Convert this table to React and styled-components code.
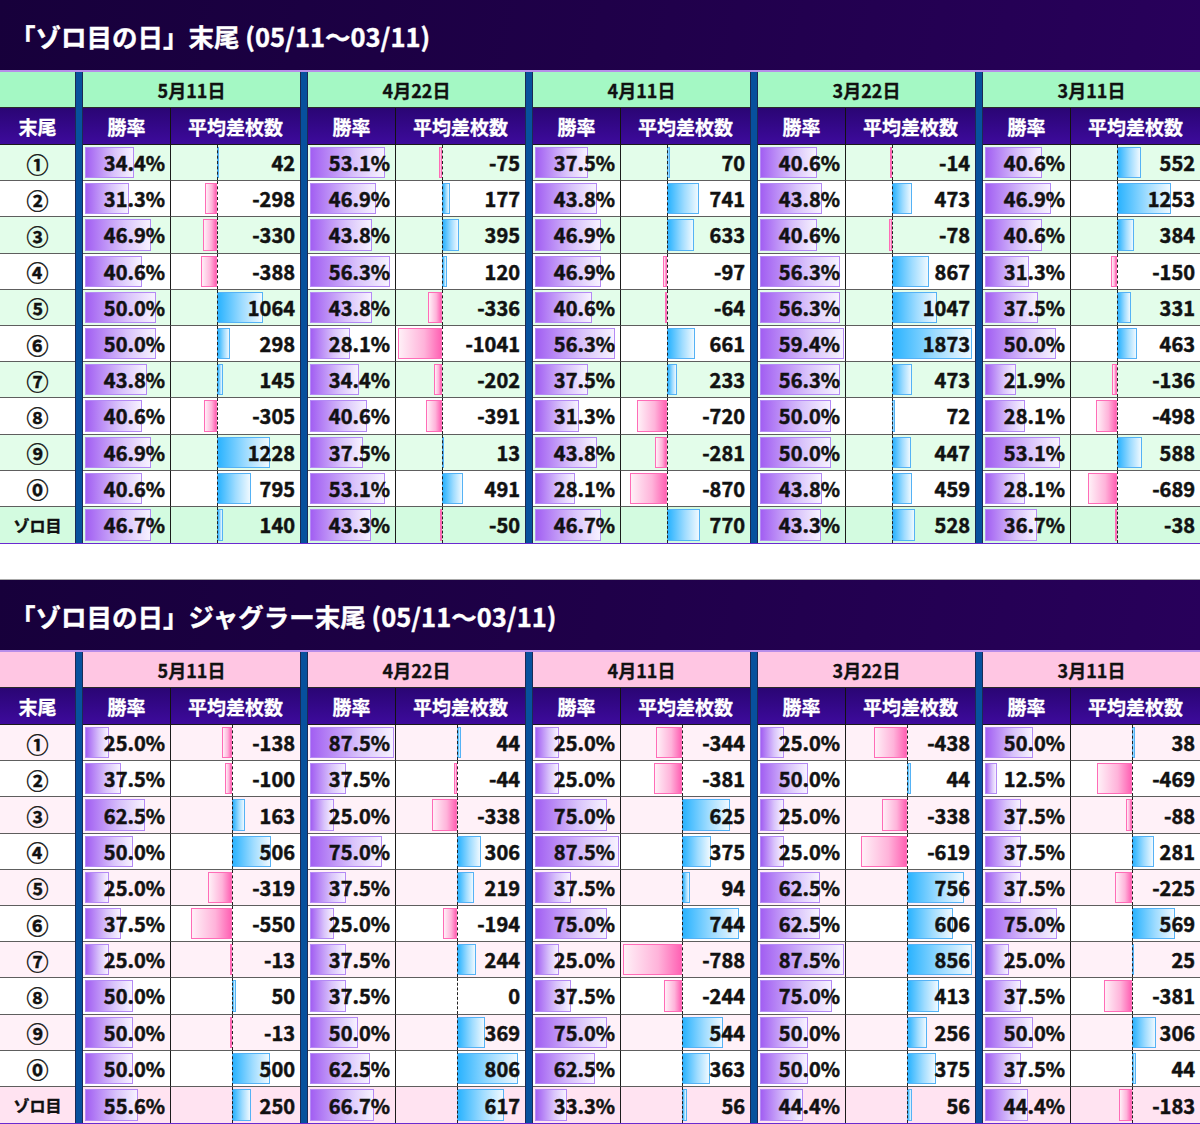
import React from "react";
import styled, { createGlobalStyle } from "styled-components";

const GlobalStyle = createGlobalStyle`
  html, body {
    margin: 0;
    padding: 0;
    background: #ffffff;
  }
  body {
    font-family: "Noto Sans CJK JP", "DejaVu Sans", sans-serif;
    width: 1200px;
  }
`;

const LABELS = ["①", "②", "③", "④", "⑤", "⑥", "⑦", "⑧", "⑨", "⓪", "ゾロ目"];
const DATES = ["5月11日", "4月22日", "4月11日", "3月22日", "3月11日"];

const PALETTES = {
  green: { date: "#a4f8c4", odd: "#e3fdea", even: "#ffffff", total: "#d3fbe0" },
  pink: { date: "#ffc6e3", odd: "#fff1f8", even: "#ffffff", total: "#ffe3f1" },
};

// each row: [rate, diff] x 5 dates
const TABLES = [
  {
    title: "「ゾロ目の日」末尾 (05/11～03/11)",
    palette: "green",
    rows: [
      [34.4, 42, 53.1, -75, 37.5, 70, 40.6, -14, 40.6, 552],
      [31.3, -298, 46.9, 177, 43.8, 741, 43.8, 473, 46.9, 1253],
      [46.9, -330, 43.8, 395, 46.9, 633, 40.6, -78, 40.6, 384],
      [40.6, -388, 56.3, 120, 46.9, -97, 56.3, 867, 31.3, -150],
      [50.0, 1064, 43.8, -336, 40.6, -64, 56.3, 1047, 37.5, 331],
      [50.0, 298, 28.1, -1041, 56.3, 661, 59.4, 1873, 50.0, 463],
      [43.8, 145, 34.4, -202, 37.5, 233, 56.3, 473, 21.9, -136],
      [40.6, -305, 40.6, -391, 31.3, -720, 50.0, 72, 28.1, -498],
      [46.9, 1228, 37.5, 13, 43.8, -281, 50.0, 447, 53.1, 588],
      [40.6, 795, 53.1, 491, 28.1, -870, 43.8, 459, 28.1, -689],
      [46.7, 140, 43.3, -50, 46.7, 770, 43.3, 528, 36.7, -38],
    ],
  },
  {
    title: "「ゾロ目の日」ジャグラー末尾 (05/11～03/11)",
    palette: "pink",
    rows: [
      [25.0, -138, 87.5, 44, 25.0, -344, 25.0, -438, 50.0, 38],
      [37.5, -100, 37.5, -44, 25.0, -381, 50.0, 44, 12.5, -469],
      [62.5, 163, 25.0, -338, 75.0, 625, 25.0, -338, 37.5, -88],
      [50.0, 506, 75.0, 306, 87.5, 375, 25.0, -619, 37.5, 281],
      [25.0, -319, 37.5, 219, 37.5, 94, 62.5, 756, 37.5, -225],
      [37.5, -550, 25.0, -194, 75.0, 744, 62.5, 606, 75.0, 569],
      [25.0, -13, 37.5, 244, 25.0, -788, 87.5, 856, 25.0, 25],
      [50.0, 50, 37.5, 0, 37.5, -244, 75.0, 413, 37.5, -381],
      [50.0, -13, 50.0, 369, 75.0, 544, 50.0, 256, 50.0, 306],
      [50.0, 500, 62.5, 806, 62.5, 363, 50.0, 375, 37.5, 44],
      [55.6, 250, 66.7, 617, 33.3, 56, 44.4, 56, 44.4, -183],
    ],
  },
];

const RATE_SPAN = 84;
const DIFF_PAD = 2;
const DIFF_SPAN = 124;

const Page = styled.div`
  width: 1200px;
`;

const Title = styled.h2`
  margin: 0;
  height: 72px;
  box-sizing: border-box;
  display: flex;
  align-items: center;
  padding: 0 0 0 10px;
  background: linear-gradient(100deg, #17003b 0%, #1f0049 50%, #28005b 100%);
  border-bottom: 2px solid #b78ee9;
  color: #ffffff;
  font-size: 25.5px;
  font-weight: 700;
  -webkit-text-stroke: 0.4px #ffffff;
`;

const Grid = styled.div`
  display: grid;
  grid-template-columns: 75px repeat(5, 8px 88px 129px);
  grid-template-rows: 36px 37px repeat(11, 36.2px);
  border-bottom: 1px solid #6a2ad0;
`;

const Gap = styled.div`
  height: 35px;
  border-bottom: 1px solid #a8a8a8;
`;

const Sep = styled.div`
  grid-row: 1 / -1;
  grid-column: ${(p) => p.$col};
  background: #07519d;
  border-left: 1px solid #1b2a55;
  border-right: 1px solid #1b2a55;
`;

const DateCell = styled.div`
  grid-column: span ${(p) => p.$span || 2};
  background: ${(p) => p.$bg};
  border-bottom: 1px solid #2a2a2a;
  display: flex;
  align-items: center;
  justify-content: center;
  font-size: 18px;
  font-weight: 700;
  color: #111;
  -webkit-text-stroke: 0.3px #111;
`;

const HeadCell = styled.div`
  background: linear-gradient(180deg, #2a0574 0%, #3d0a9c 100%);
  border-bottom: 1px solid #1a1a1a;
  border-right: ${(p) => (p.$line ? "1px solid #111" : "none")};
  display: flex;
  align-items: center;
  justify-content: center;
  color: #ffffff;
  font-size: 19px;
  font-weight: 700;
  -webkit-text-stroke: 0.3px #ffffff;
`;

const Cell = styled.div`
  position: relative;
  box-sizing: border-box;
  background: ${(p) => p.$bg};
  border-bottom: ${(p) => (p.$last ? "none" : "1px solid #5e5e5e")};
  border-right: ${(p) => (p.$line ? "1px solid #1c1c1c" : "none")};
  display: flex;
  align-items: center;
  justify-content: flex-end;
  padding-right: 5px;
  overflow: hidden;
`;

const LabelCell = styled(Cell)`
  justify-content: center;
  padding-right: 0;
  font-size: ${(p) => (p.$small ? "16px" : "22px")};
  font-weight: 700;
  color: #111;
  -webkit-text-stroke: 0.4px #111;
`;

const Value = styled.span`
  position: relative;
  z-index: 1;
  font-size: 20px;
  font-weight: 700;
  color: #111;
  -webkit-text-stroke: 0.5px #111;
`;

const RateBar = styled.div`
  position: absolute;
  left: 2px;
  top: 2px;
  bottom: 2px;
  box-sizing: border-box;
  border: 1px solid #b48af4;
  background: linear-gradient(90deg, #a25ff2 0%, #d9c3fb 60%, #f7f2ff 100%);
`;

const DiffBar = styled.div`
  position: absolute;
  top: 2px;
  bottom: 2px;
  box-sizing: border-box;
  border: 1px solid ${(p) => (p.$neg ? "#ff6cb7" : "#55b2f5")};
  background: ${(p) =>
    p.$neg
      ? "linear-gradient(90deg, #fff0f7 0%, #ffb3da 60%, #ff62b4 100%)"
      : "linear-gradient(90deg, #2ab3ff 0%, #9fdcff 55%, #eff9ff 100%)"};
`;

const Axis = styled.div`
  position: absolute;
  top: 0;
  bottom: 0;
  width: 0;
  border-left: 1px dashed #222;
`;

function tone(i, count) {
  if (i === count - 1) return "total";
  return i % 2 === 0 ? "odd" : "even";
}

function StatTable({ table }) {
  const pal = PALETTES[table.palette];
  const rates = table.rows.flatMap((r) => r.filter((_, i) => i % 2 === 0));
  const diffs = table.rows.flatMap((r) => r.filter((_, i) => i % 2 === 1));
  const maxRate = Math.max(...rates);
  const minDiff = Math.min(0, ...diffs);
  const maxDiff = Math.max(0, ...diffs);
  const perUnit = DIFF_SPAN / (maxDiff - minDiff);
  const axis = DIFF_PAD + -minDiff * perUnit;

  return (
    <>
      <Title>{table.title}</Title>
      <Grid>
        {DATES.map((_, g) => (
          <Sep key={`s${g}`} $col={2 + g * 3} />
        ))}

        <DateCell $span={1} $bg={pal.date} />
        {DATES.map((d) => (
          <DateCell key={d} $bg={pal.date}>
            {d}
          </DateCell>
        ))}

        <HeadCell>末尾</HeadCell>
        {DATES.map((d) => (
          <React.Fragment key={`h${d}`}>
            <HeadCell $line>勝率</HeadCell>
            <HeadCell>平均差枚数</HeadCell>
          </React.Fragment>
        ))}

        {table.rows.map((row, ri) => {
          const bg = pal[tone(ri, table.rows.length)];
          const last = ri === table.rows.length - 1;
          return (
            <React.Fragment key={LABELS[ri]}>
              <LabelCell $bg={bg} $last={last} $small={ri === 10}>
                {LABELS[ri]}
              </LabelCell>
              {DATES.map((d, g) => {
                const rate = row[g * 2];
                const diff = row[g * 2 + 1];
                const w = Math.max(Math.abs(diff) * perUnit, diff === 0 ? 0 : 2);
                return (
                  <React.Fragment key={`${ri}${d}`}>
                    <Cell $bg={bg} $last={last} $line>
                      <RateBar style={{ width: (rate / maxRate) * RATE_SPAN }} />
                      <Value>{rate.toFixed(1)}%</Value>
                    </Cell>
                    <Cell $bg={bg} $last={last}>
                      {diff !== 0 && (
                        <DiffBar
                          $neg={diff < 0}
                          style={{ left: diff < 0 ? axis - w : axis, width: w }}
                        />
                      )}
                      <Axis style={{ left: axis }} />
                      <Value>{diff}</Value>
                    </Cell>
                  </React.Fragment>
                );
              })}
            </React.Fragment>
          );
        })}
      </Grid>
    </>
  );
}

export default function App() {
  return (
    <Page>
      <GlobalStyle />
      <StatTable table={TABLES[0]} />
      <Gap />
      <StatTable table={TABLES[1]} />
    </Page>
  );
}
